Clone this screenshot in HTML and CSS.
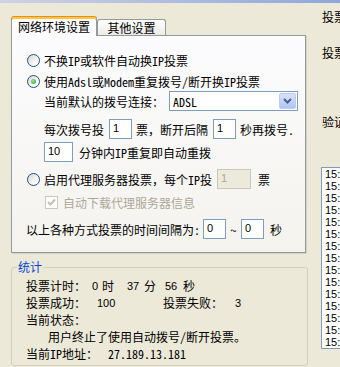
FILE: index.html
```html
<!DOCTYPE html>
<html lang="zh-CN">
<head>
    <meta charset="UTF-8">
    <meta name="viewport" content="width=device-width, initial-scale=1.0">
    <title>投票设置</title>
    <link rel="stylesheet" href="styles.css">
</head>
<body>
    <div class="title-strip"></div>
    <div class="window">
        <div class="left-col">
            <div class="tabs">
                <div class="tab tab-active">网络环境设置</div>
                <div class="tab">其他设置</div>
            </div>
            <div class="tab-panel">
                <div class="row">
                    <span class="radio"></span>
                    <span class="radio-label">不换IP或软件自动换IP投票</span>
                </div>
                <div class="row row-adsl">
                    <span class="radio radio-checked"></span>
                    <span class="radio-label">使用Adsl或Modem重复拨号/断开换IP投票</span>
                </div>
                <div class="row sub-row">
                    <span>当前默认的拨号连接：</span>
                    <div class="combo">
                        <span>ADSL</span>
                        <span class="combo-btn">
                            <svg width="9" height="6" viewBox="0 0 9 6"><path d="M1 1 L4.5 4.5 L8 1" fill="none" stroke="#4d6185" stroke-width="2"/></svg>
                        </span>
                    </div>
                </div>
                <div class="row sub-row row-dial">
                    <span>每次拨号投</span>
                    <span class="text-box box-sm">1</span>
                    <span>票，断开后隔</span>
                    <span class="text-box box-sm">1</span>
                    <span>秒再拨号.</span>
                </div>
                <div class="row sub-row row-repeat">
                    <span class="text-box box-md">10</span>
                    <span>分钟内IP重复即自动重拨</span>
                </div>
                <div class="row row-proxy">
                    <span class="radio"></span>
                    <span class="radio-label">启用代理服务器投票，每个IP投</span>
                    <span class="text-box box-proxy disabled">1</span>
                    <span class="proxy-unit">票</span>
                </div>
                <div class="row row-check">
                    <span class="checkbox">
                        <svg width="11" height="11" viewBox="0 0 11 11"><path d="M2 5 L4.5 7.5 L9 2.5" fill="none" stroke="#c3c1b3" stroke-width="2"/></svg>
                    </span>
                    <span class="disabled-text">自动下载代理服务器信息</span>
                </div>
                <div class="row row-interval">
                    <span>以上各种方式投票的时间间隔为:</span>
                    <span class="text-box box-int">0</span>
                    <span class="tilde">~</span>
                    <span class="text-box box-int">0</span>
                    <span class="interval-unit">秒</span>
                </div>
            </div>

            <fieldset class="stats">
                <legend>统计</legend>
                <div class="stat-row">
                    <span class="stat-label">投票计时：</span>
                    <span class="num w10">0</span><span class="w25">时</span><span class="num w17">37</span><span class="w21">分</span><span class="num w18">56</span><span>秒</span>
                </div>
                <div class="stat-row">
                    <span class="stat-label">投票成功：</span>
                    <span class="num count">100</span><span class="stat-label">投票失败：</span><span class="num">3</span>
                </div>
                <div class="stat-row">
                    <span>当前状态：</span>
                </div>
                <div class="stat-row status">
                    <span>用户终止了使用自动拨号/断开投票。</span>
                </div>
                <div class="stat-row">
                    <span class="ip-label">当前IP地址：</span><span>27.189.13.181</span>
                </div>
            </fieldset>
        </div>

        <div class="side">
            <div class="side-label first">投票地址：</div>
            <div class="side-label second">投票项目：</div>
            <div class="side-label third">验证码：</div>
            <div class="log-list">
                <div>15:20:11</div>
                <div>15:21:02</div>
                <div>15:21:40</div>
                <div>15:22:05</div>
                <div>15:22:51</div>
                <div>15:23:30</div>
                <div>15:23:56</div>
                <div>15:24:43</div>
                <div>15:25:20</div>
                <div>15:25:47</div>
                <div>15:26:33</div>
                <div>15:27:10</div>
                <div>15:27:38</div>
                <div>15:28:24</div>
                <div>15:28:59</div>
            </div>
        </div>
    </div>
</body>
</html>
```

FILE: styles.css
```css
body {
    margin: 0;
    background-color: #ece9d8;
    font-family: "Noto Sans Mono CJK SC", "Noto Sans CJK SC", sans-serif;
    font-size: 12px;
    color: #000;
    overflow: hidden;
}

.title-strip {
    height: 3px;
    background: linear-gradient(to right, #cdd3e3, #8fa6dc);
}

.window {
    display: flex;
    align-items: flex-start;
    padding-left: 11px;
}

.left-col {
    width: 297px;
    flex: none;
    margin-top: 13px;
}

/* tab header */
.tabs {
    display: flex;
    align-items: flex-end;
    position: relative;
    z-index: 1;
    margin-bottom: -1px;
}

.tab {
    width: 69px;
    height: 16px;
    box-sizing: border-box;
    border: 1px solid #919b9c;
    border-bottom: none;
    border-radius: 3px 3px 0 0;
    background: linear-gradient(#ffffff, #ecebe6);
    text-align: center;
    line-height: 15px;
    margin-bottom: 1px;
}

.tab-active {
    width: 86px;
    height: 20px;
    margin-bottom: 0;
    border-top-color: #e68b2c;
    background: #fcfcfe;
    box-shadow: inset 0 2px 0 #ffc73c;
    line-height: 19px;
}

.tab-panel {
    width: 295px;
    height: 218px;
    box-sizing: border-box;
    border: 1px solid #919b9c;
    background: linear-gradient(#fcfcfe, #f4f3ee);
    box-shadow: 1px 1px 0 #d4d1c2;
    padding: 14px 0 0 15px;
}

.row {
    display: flex;
    align-items: center;
    height: 20px;
    white-space: nowrap;
}

.row-adsl {
    margin-top: 1px;
}

.sub-row {
    padding-left: 17px;
}

.row-dial {
    margin-top: 8px;
}

.row-repeat {
    margin-top: 3px;
}

.row-proxy {
    margin-top: 7px;
}

.row-check {
    height: 16px;
    margin-top: 5px;
    padding-left: 18px;
}

.row-interval {
    margin-top: 9px;
    margin-left: -1px;
}

/* radio buttons */
.radio {
    width: 13px;
    height: 13px;
    box-sizing: border-box;
    flex: none;
    border: 1px solid #1c5180;
    border-radius: 50%;
    background: linear-gradient(135deg, #d8d4ca, #ffffff 75%);
    display: flex;
    align-items: center;
    justify-content: center;
}

.radio-checked::after {
    content: "";
    width: 5px;
    height: 5px;
    border-radius: 50%;
    background: radial-gradient(circle at 35% 35%, #9be39b, #21a121);
}

.radio-label {
    margin-left: 4px;
}

/* combo box */
.combo {
    display: flex;
    align-items: center;
    justify-content: space-between;
    width: 129px;
    height: 20px;
    box-sizing: border-box;
    border: 1px solid #7f9db9;
    background: #fff;
    margin-left: 5px;
    padding: 0 1px 0 3px;
}

.combo-btn {
    width: 17px;
    height: 16px;
    box-sizing: border-box;
    border: 1px solid #bccbee;
    border-radius: 2px;
    background: linear-gradient(#d6e2fd, #b1c5f4);
    display: flex;
    align-items: center;
    justify-content: center;
}

/* text boxes */
.text-box {
    height: 20px;
    box-sizing: border-box;
    border: 1px solid #7f9db9;
    background: #fff;
    font-family: "Liberation Sans", sans-serif;
    font-size: 11px;
    line-height: 16px;
    padding-left: 3px;
    margin: 0 4px 0 5px;
}

.box-sm {
    width: 23px;
}

.box-md {
    width: 29px;
    margin: 0 6px 0 0;
}

.box-proxy {
    width: 34px;
    margin: 0 0 0 5px;
}

.box-int {
    width: 23px;
    margin: 0;
}

.disabled {
    background: #ebeadb;
    border-color: #c9c7ba;
    color: #aca899;
}

.proxy-unit {
    margin-left: 7px;
}

.tilde {
    width: 15px;
    text-align: center;
}

.interval-unit {
    margin-left: 6px;
}

.row-interval > span:first-child {
    margin-right: 3px;
}

.checkbox {
    width: 13px;
    height: 13px;
    box-sizing: border-box;
    border: 1px solid #cac8bb;
    background: #fff;
    display: flex;
    align-items: center;
    justify-content: center;
}

.disabled-text {
    color: #aca899;
    margin-left: 5px;
}

/* stats group */
.stats {
    margin: 7px 0 0;
    width: 297px;
    min-width: 0;
    box-sizing: border-box;
    border: 1px solid #d0d0bf;
    border-radius: 3px;
    padding: 3px 0 3px 5px;
}

.stats legend {
    color: #0046d5;
    padding: 0 1px;
    line-height: 14px;
}

.stat-row {
    display: flex;
    align-items: center;
    height: 17px;
    margin-left: 9px;
    white-space: nowrap;
}

.stat-label {
    width: 66px;
    flex: none;
}

.num {
    font-family: "Liberation Sans", sans-serif;
    font-size: 11px;
}

.w10 { width: 10px; }
.w17 { width: 17px; }
.w18 { width: 18px; }
.w21 { width: 21px; }
.w25 { width: 25px; }

.count {
    width: 66px;
    margin-left: 5px;
}

.count + .stat-label {
    width: 72px;
}

.status {
    padding-left: 22px;
}

.ip-label {
    width: 82px;
}

/* right column */
.side {
    width: 200px;
    flex: none;
    margin-left: 13px;
}

.side-label {
    line-height: 14px;
    padding-left: 1px;
    white-space: nowrap;
}

.first {
    margin-top: 7px;
}

.second {
    margin-top: 22px;
}

.third {
    margin-top: 55px;
}

.log-list {
    margin-top: 38px;
    height: 182px;
    box-sizing: border-box;
    border: 1px solid #7f9db9;
    background: #fff;
    padding: 0 0 0 3px;
    font-family: "Liberation Sans", sans-serif;
    font-size: 11px;
    line-height: 12px;
    white-space: nowrap;
}
```
